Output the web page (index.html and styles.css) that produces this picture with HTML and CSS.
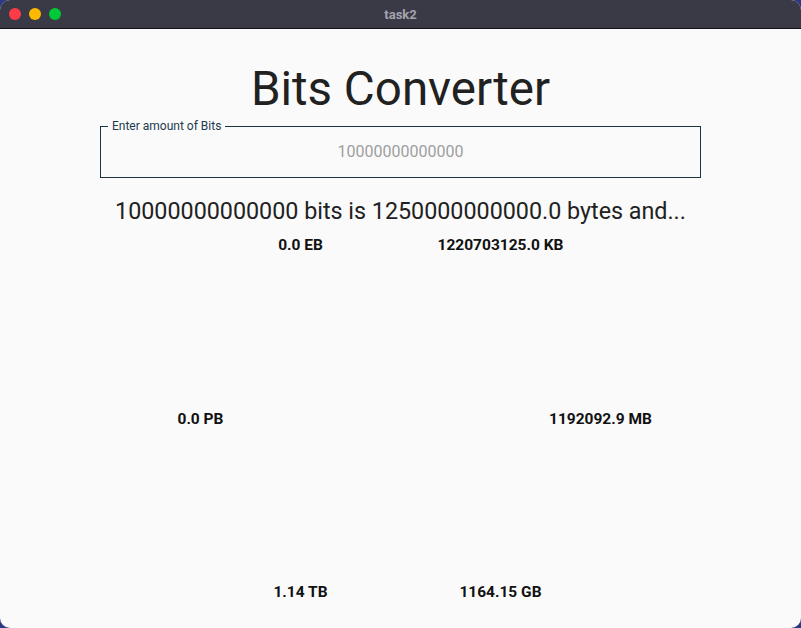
FILE: index.html
```html
<!DOCTYPE html>
<html>
<head>
<meta charset="utf-8">
<link rel="stylesheet" href="styles.css">
</head>
<body>
<div class="window">
  <div class="titlebar">
    <div class="lights">
      <span class="light red"></span>
      <span class="light yellow"></span>
      <span class="light green"></span>
    </div>
    <div class="title">task2</div>
  </div>
  <div class="content">
    <h1 class="heading">Bits Converter</h1>
    <fieldset class="field">
      <legend class="field-label">Enter amount of Bits</legend>
      <div class="field-hint">10000000000000</div>
    </fieldset>
    <p class="summary">10000000000000 bits is 1250000000000.0 bytes and...</p>
    <div class="results">
      <div class="res r1a">0.0 EB</div>
      <div class="res r1b">1220703125.0 KB</div>
      <div class="res r2a">0.0 PB</div>
      <div class="res r2b">1192092.9 MB</div>
      <div class="res r3a">1.14 TB</div>
      <div class="res r3b">1164.15 GB</div>
    </div>
  </div>
</div>
</body>
</html>
```
FILE: styles.css
```css
html, body {
  margin: 0;
  padding: 0;
  width: 801px;
  height: 628px;
  overflow: hidden;
  background: #2c3a86;
}
.window {
  width: 801px;
  height: 628px;
  border-radius: 10px;
  overflow: hidden;
  background: #fafafa;
  display: flex;
  flex-direction: column;
  font-family: Roboto, "Liberation Sans", sans-serif;
}
.titlebar {
  height: 28px;
  background: #3a3946;
  border-bottom: 1px solid #111;
  display: flex;
  align-items: center;
  justify-content: center;
  position: relative;
  flex-shrink: 0;
}
.lights {
  position: absolute;
  left: 9px;
  top: 8px;
  display: flex;
  gap: 8px;
}
.light {
  width: 12px;
  height: 12px;
  border-radius: 50%;
  display: block;
}
.red { background: #fe3b47; }
.yellow { background: #fdb900; }
.green { background: #00c937; }
.title {
  color: #a4a3ad;
  font-size: 13px;
  font-weight: 700;
}
.content {
  flex: 1;
  display: flex;
  flex-direction: column;
  align-items: center;
}
.heading {
  margin: 31px 0 0 0;
  font-size: 47.5px;
  font-weight: 400;
  line-height: 58px;
  color: #212121;
}
.field {
  box-sizing: border-box;
  width: 601px;
  margin: 1px 0 0 0;
  padding: 0;
  border: 1px solid #1c3444;
}
.field-label {
  font-size: 12px;
  line-height: 14px;
  color: #1c3a4e;
  padding: 0 4px;
  margin-left: 7px;
}
.field-hint {
  height: 44px;
  line-height: 38px;
  text-align: center;
  font-size: 16px;
  color: #9e9e9e;
}
.summary {
  margin: 18px 0 0 0;
  font-size: 23.3px;
  line-height: 30px;
  color: #212121;
}
.results {
  width: 800px;
  display: grid;
  grid-template-columns: repeat(8, 100px);
  grid-template-rows: 174px 173px auto;
  margin-top: 11px;
}
.res {
  font-size: 15.5px;
  font-weight: 700;
  line-height: 16px;
  color: #111;
  text-align: center;
}
.r1a { grid-column: 3 / span 2; }
.r1b { grid-column: 5 / span 2; }
.r2a { grid-column: 2 / span 2; }
.r2b { grid-column: 6 / span 2; }
.r3a { grid-column: 3 / span 2; }
.r3b { grid-column: 5 / span 2; }
```
